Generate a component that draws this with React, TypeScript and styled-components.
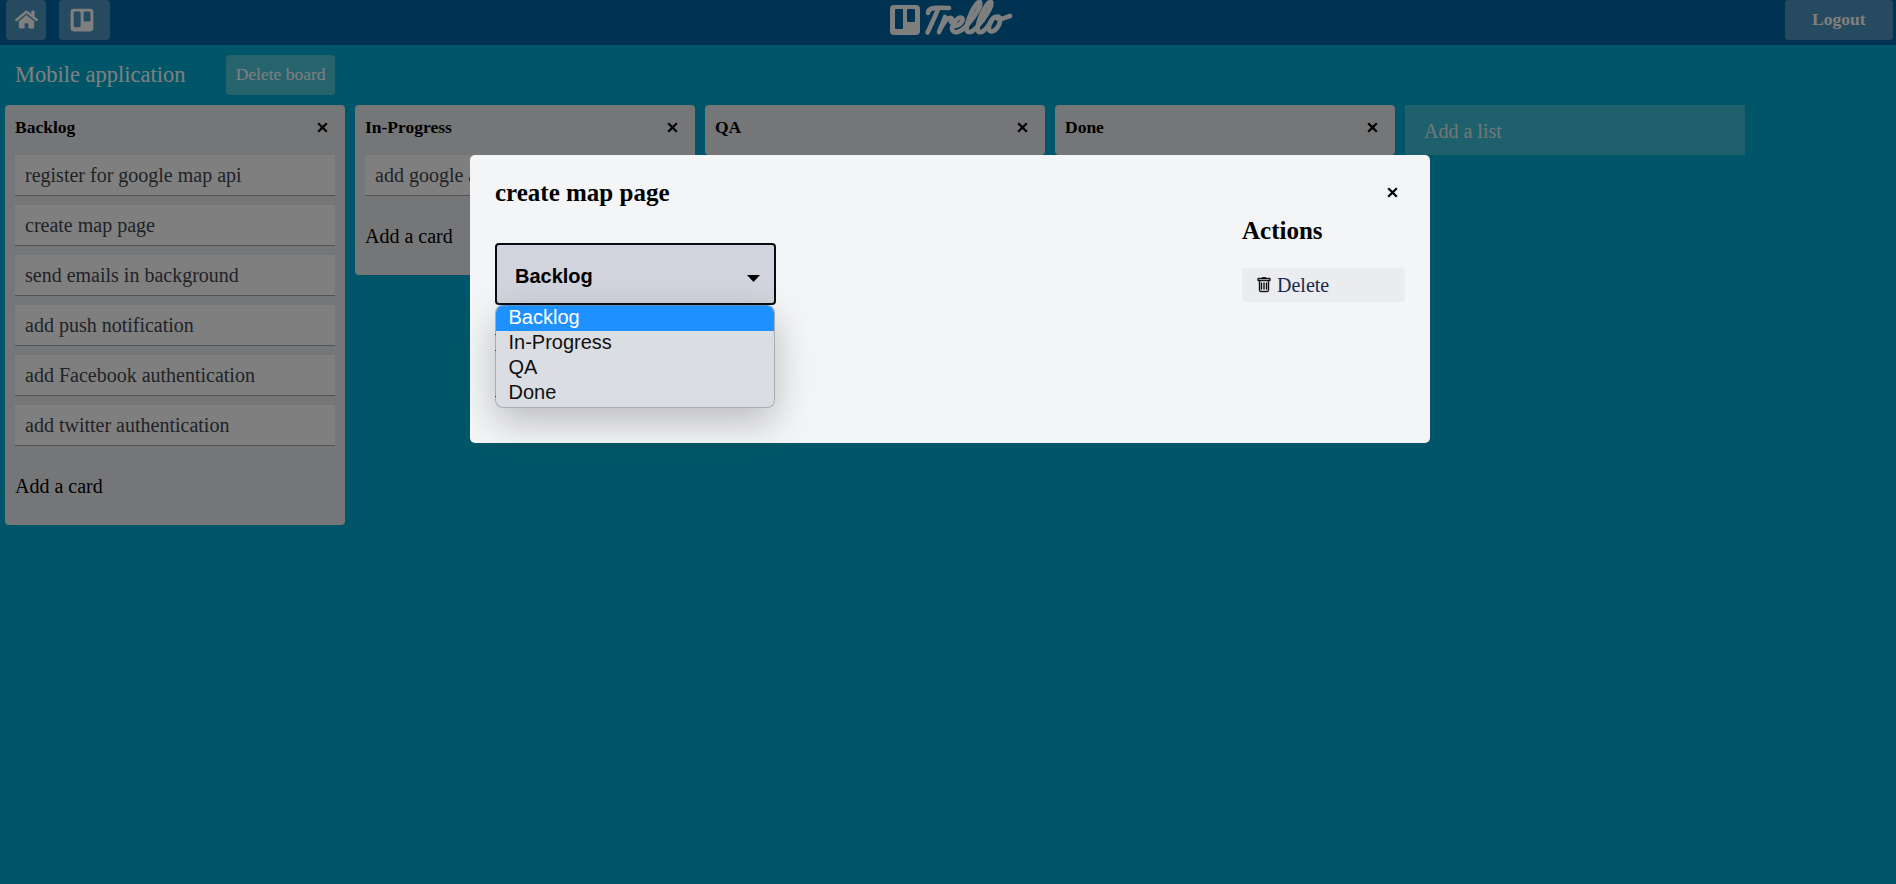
import React from "react";
import styled, { createGlobalStyle } from "styled-components";
import { FaHome, FaTrello } from "react-icons/fa";
import { BsTrash } from "react-icons/bs";

const GlobalStyle = createGlobalStyle`
  * { box-sizing: border-box; }
  body {
    margin: 0;
    background: #00aecc;
    font-family: "Liberation Serif", "Times New Roman", serif;
    font-size: 20px;
    overflow: hidden;
  }
  button { font-family: inherit; border: 0; padding: 0; }
`;

const Page = styled.div`
  height: 884px;
  background: #00add0;
`;

const Header = styled.header`
  display: flex;
  align-items: flex-start;
  justify-content: space-between;
  height: 45px;
  padding: 0 3px 0 6px;
  background: #0067a3;
`;

const HeaderSide = styled.div<{ $end?: boolean }>`
  display: flex;
  flex: 1;
  gap: 13px;
  justify-content: ${(p) => (p.$end ? "flex-end" : "flex-start")};
`;

const HeaderButton = styled.button<{ $width: number; $pad?: number }>`
  display: flex;
  align-items: center;
  width: ${(p) => p.$width}px;
  height: 40px;
  padding-left: ${(p) => p.$pad ?? 0}px;
  padding-bottom: 1px;
  border-radius: 4px;
  background: #4d95bf;
  color: #fff;
  font-size: 17.5px;
  font-weight: bold;
`;

const Brand = styled.svg`
  width: 124px;
  height: 38px;
  margin-left: 4px;
`;

const BoardBar = styled.div`
  display: flex;
  align-items: center;
  height: 60px;
  padding-left: 15px;
  gap: 40px;
`;

const BoardTitle = styled.h1`
  margin: 0;
  font-size: 22.5px;
  font-weight: normal;
  color: #fff;
`;

const DeleteBoard = styled.button`
  width: 109px;
  height: 40px;
  padding: 0 0 2px 1px;
  border-radius: 4px;
  background: #4dc6db;
  color: #fff;
  font-size: 17.5px;
`;

const Lists = styled.main`
  display: flex;
  align-items: flex-start;
  gap: 10px;
  padding-left: 5px;
`;

const List = styled.section`
  width: 340px;
  padding: 0 10px;
  border-radius: 4px;
  background: #ebecf0;
`;

const ListHeader = styled.div`
  display: flex;
  align-items: center;
  justify-content: space-between;
  height: 50px;
  padding: 0 7px 5px 0;
`;

const ListTitle = styled.h2`
  margin: 0;
  font-size: 17.5px;
`;

const Cards = styled.div`
  display: flex;
  flex-direction: column;
  gap: 10px;
`;

const Card = styled.div`
  height: 40px;
  padding-left: 10px;
  line-height: 41px;
  background: #fff;
  color: #42464e;
  box-shadow: 0 1px 0 #a2a6ad;
`;

const AddCard = styled.div`
  height: 80px;
  line-height: 82px;
`;

const AddList = styled.div`
  width: 340px;
  height: 50px;
  padding-left: 19px;
  line-height: 52px;
  background: #3dc3d8;
  color: #e4eef0;
`;

const Overlay = styled.div`
  position: absolute;
  inset: 0;
  display: flex;
  align-items: flex-start;
  justify-content: center;
  padding-top: 155px;
  background: rgba(0, 0, 0, 0.5);
`;

const Dialog = styled.div`
  width: 960px;
  height: 288px;
  margin-left: 4px;
  padding: 25px;
  border-radius: 5px;
  background: #f4f5f7;
`;

const DialogHeader = styled.div`
  display: flex;
  align-items: center;
  justify-content: space-between;
  height: 26px;
  padding-right: 7px;

  svg {
    margin-bottom: 2px;
  }
`;

const Heading = styled.h2`
  margin: 0;
  font-size: 25px;
  line-height: 28px;
`;

const DialogBody = styled.div`
  display: flex;
  justify-content: space-between;
`;

const Picker = styled.div`
  position: relative;
  width: 281px;
  margin-top: 37px;
  font-family: "Liberation Sans", Arial, sans-serif;
`;

const Select = styled.div`
  display: flex;
  align-items: center;
  justify-content: space-between;
  height: 62px;
  padding: 4px 14px 0 18px;
  border: 2px solid #0b0b12;
  border-radius: 4px;
  background: #d1d4dc;
  font-weight: bold;

  svg {
    margin-top: 4px;
  }
`;

const Menu = styled.ul`
  position: absolute;
  top: 62px;
  left: 0;
  width: 280px;
  height: 103px;
  margin: 0;
  padding: 0;
  list-style: none;
  border: 1px solid #a9adb3;
  border-top-color: #5a93c8;
  border-radius: 8px;
  background: #dadde2;
  box-shadow: 0 14px 38px rgba(0, 0, 0, 0.24);

  /* slivers of the covered form that stick out past the menu's left edge */
  &::before {
    content: "";
    position: absolute;
    top: 28px;
    left: -1px;
    width: 1px;
    height: 1px;
    background: #333;
    box-shadow: 0 16px 0 #333, 0 62px 0 #333;
  }
`;

const Option = styled.li<{ $active?: boolean }>`
  height: 25px;
  padding-left: 12.5px;
  line-height: 23px;
  border-radius: ${(p) => (p.$active ? "7px 7px 0 0" : "0")};
  background: ${(p) => (p.$active ? "#1e90ff" : "transparent")};
  color: ${(p) => (p.$active ? "#fff" : "#101010")};
`;

const Actions = styled.div`
  width: 163px;
  padding-top: 11px;
`;

const DeleteButton = styled.button`
  display: flex;
  align-items: center;
  gap: 5px;
  width: 163px;
  height: 34px;
  margin-top: 23px;
  padding-left: 14px;
  border-radius: 3px;
  background: #eaecf0;
  color: #172b4d;
  font-size: 20px;
`;

const TrashIcon = styled(BsTrash)`
  color: #111;
  stroke: #111;
  stroke-width: 0.4;
`;

const Cross = () => (
  <svg width="11" height="11" viewBox="0 0 11 11">
    <path d="M1.200 1.200L9.800 9.800M9.800 1.200L1.200 9.800" stroke="#000" strokeWidth="2.300" />
  </svg>
);

const Logo = () => (
  <Brand viewBox="0 0 124 38" fill="none" stroke="#fff" strokeLinecap="round" strokeLinejoin="round">
    <path
      fill="#fff"
      stroke="none"
      fillRule="evenodd"
      d="M4 5h22a4 4 0 0 1 4 4v22a4 4 0 0 1-4 4H4a4 4 0 0 1-4-4V9a4 4 0 0 1 4-4zM6 9a1 1 0 0 0-1 1v18a1 1 0 0 0 1 1h6a1 1 0 0 0 1-1V10a1 1 0 0 0-1-1zM18 9a1 1 0 0 0-1 1v11a1 1 0 0 0 1 1h6a1 1 0 0 0 1-1V10a1 1 0 0 0-1-1z"
    />
    <g strokeWidth="4.600">
      <path d="M38 13C38 7 46 7.500 59 8" />
      <path d="M48 9C45 17 41 25 37.500 32.500" />
      <path d="M55 17L49 32C52 25 57 17 61 18C63 19 62 21 61 22" />
      <path d="M65 26C71 25 74 20 72 18C68 16 62 24 62 29C63 35 72 32 78 24" />
      <path d="M78 24C85 17 92 5 90 2C86 0 75 23 77 31C80 35 87 28 92 21" />
      <path d="M92 21C98 13 103 4 101 2C97 0 86 23 88 31C91 35 96 29 101 22" />
      <path d="M108 17C102 16 98 25 99 30C102 35 110 27 110 20C110 16 107 16 107 18C109 21 115 18 120 16" />
    </g>
  </Brand>
);

const lists = [
  {
    name: "Backlog",
    cards: [
      "register for google map api",
      "create map page",
      "send emails in background",
      "add push notification",
      "add Facebook authentication",
      "add twitter authentication",
    ],
  },
  { name: "In-Progress", cards: ["add google a"] },
  { name: "QA", cards: [] },
  { name: "Done", cards: [] },
];

export default function App() {
  return (
    <>
      <GlobalStyle />
      <Page>
        <Header>
          <HeaderSide>
            <HeaderButton $width={40} $pad={9}>
              <FaHome size={23} />
            </HeaderButton>
            <HeaderButton $width={51} $pad={10}>
              <FaTrello size={26} />
            </HeaderButton>
          </HeaderSide>
          <Logo />
          <HeaderSide $end>
            <HeaderButton $width={108} $pad={27}>
              Logout
            </HeaderButton>
          </HeaderSide>
        </Header>
        <BoardBar>
          <BoardTitle>Mobile application</BoardTitle>
          <DeleteBoard>Delete board</DeleteBoard>
        </BoardBar>
        <Lists>
          {lists.map((list) => (
            <List key={list.name}>
              <ListHeader>
                <ListTitle>{list.name}</ListTitle>
                <Cross />
              </ListHeader>
              {list.cards.length > 0 && (
                <>
                  <Cards>
                    {list.cards.map((card) => (
                      <Card key={card}>{card}</Card>
                    ))}
                  </Cards>
                  <AddCard>Add a card</AddCard>
                </>
              )}
            </List>
          ))}
          <AddList>Add a list</AddList>
        </Lists>
      </Page>
      <Overlay>
        <Dialog>
          <DialogHeader>
            <Heading>create map page</Heading>
            <Cross />
          </DialogHeader>
          <DialogBody>
            <Picker>
              <Select>
                Backlog
                <svg width="13" height="7" viewBox="0 0 13 7">
                  <path d="M0 0h13L6.500 7z" fill="#000" />
                </svg>
              </Select>
              <Menu>
                {lists.map((list, i) => (
                  <Option key={list.name} $active={i === 0}>
                    {list.name}
                  </Option>
                ))}
              </Menu>
            </Picker>
            <Actions>
              <Heading>Actions</Heading>
              <DeleteButton>
                <TrashIcon size={16} />
                Delete
              </DeleteButton>
            </Actions>
          </DialogBody>
        </Dialog>
      </Overlay>
    </>
  );
}
